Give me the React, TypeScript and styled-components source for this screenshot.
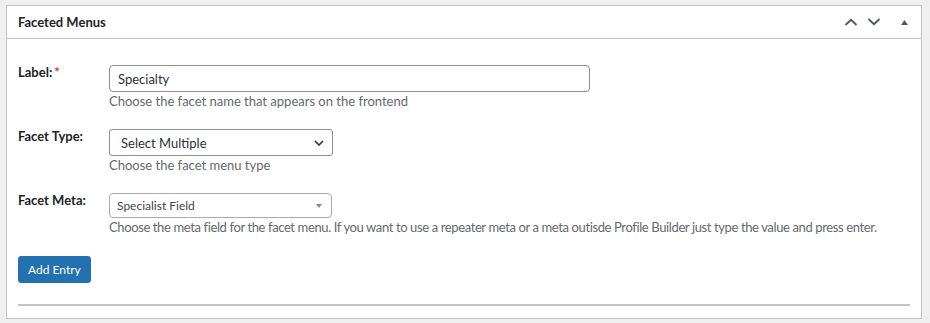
import React from 'react';
import styled, { createGlobalStyle } from 'styled-components';

const GlobalStyle = createGlobalStyle`
  html, body {
    margin: 0;
    padding: 0;
    background: #f0f0f1;
  }
  body {
    font-family: Lato, "Noto Sans", sans-serif;
    font-size: 13px;
    color: #1d2327;
  }
`;

const Page = styled.div`
  padding: 5px 0 0 6px;
`;

const Panel = styled.div`
  width: 916px;
  box-sizing: border-box;
  background: #fff;
  border: 1px solid #c3c4c7;
`;

const PanelHeader = styled.div`
  display: flex;
  align-items: center;
  justify-content: space-between;
  height: 33px;
  box-sizing: border-box;
  padding: 0 11px;
  border-bottom: 1px solid #c3c4c7;
`;

const Title = styled.h2`
  margin: 0;
  font-size: 13px;
  font-weight: 700;
  color: #1d2327;
`;

const Controls = styled.div`
  display: flex;
  align-items: center;
  gap: 9px;
  margin-right: -1px;
`;

const IconButton = styled.span<{ $gap?: number }>`
  display: flex;
  align-items: center;
  justify-content: center;
  width: 14px;
  height: 14px;
  margin-left: ${p => p.$gap ?? 0}px;
`;

const PanelBody = styled.div`
  padding: 26px 11px 12px;
`;

const Row = styled.div<{ $mb: number }>`
  display: grid;
  grid-template-columns: 91px 1fr;
  margin-bottom: ${p => p.$mb}px;
`;

const Label = styled.label`
  font-weight: 700;
  font-size: 13px;
  line-height: 16px;
  margin-top: -1px;
  color: #1d2327;
`;

const Required = styled.span`
  color: #d63638;
  margin-left: 2px;
`;

const Field = styled.div`
  display: flex;
  flex-direction: column;
  align-items: flex-start;
`;

const TextInput = styled.div`
  width: 481px;
  height: 27px;
  box-sizing: border-box;
  border: 1px solid #8c8f94;
  border-radius: 4px;
  padding: 0 8px;
  display: flex;
  align-items: center;
  font-size: 13px;
  color: #2c3338;
`;

const NativeSelect = styled.div`
  width: 224px;
  height: 27px;
  box-sizing: border-box;
  border: 1px solid #8c8f94;
  border-radius: 3px;
  padding: 0 8px 0 11px;
  display: flex;
  align-items: center;
  justify-content: space-between;
  font-size: 13px;
  color: #2c3338;
`;

const ComboSelect = styled.div`
  width: 223px;
  height: 25px;
  box-sizing: border-box;
  border: 1px solid #aaa;
  border-radius: 4px;
  padding: 0 8px 0 7px;
  display: flex;
  align-items: center;
  justify-content: space-between;
  font-size: 12px;
  color: #444;
`;

const Caret = styled.span`
  width: 0;
  height: 0;
  border-left: 3.5px solid transparent;
  border-right: 3.5px solid transparent;
  border-top: 4px solid #888;
  margin-right: 1px;
`;

const Help = styled.p<{ $tight?: boolean }>`
  margin: 0;
  font-size: 13px;
  line-height: 18px;
  color: #646970;
  white-space: nowrap;
  letter-spacing: ${p => (p.$tight ? '-0.38px' : '0')};
`;

const Button = styled.button`
  display: block;
  height: 27px;
  padding: 0 9px;
  border: 1px solid #2271b1;
  border-radius: 3px;
  background: #2271b1;
  color: #fff;
  font-family: inherit;
  font-size: 12px;
  cursor: pointer;
`;

const Divider = styled.hr`
  margin: 21px 0 0;
  border: 0;
  height: 2px;
  background: #c3c4c7;
`;

const Chevron = ({ up }: { up?: boolean }) => (
  <svg width="14" height="8" viewBox="0 0 14 8">
    <polyline
      points={up ? '1.5,7 7,1.8 12.5,7' : '1.5,1 7,6.2 12.5,1'}
      fill="none"
      stroke="#50575e"
      strokeWidth="1.8"
    />
  </svg>
);

export default function App() {
  return (
    <>
      <GlobalStyle />
      <Page>
        <Panel>
          <PanelHeader>
            <Title>Faceted Menus</Title>
            <Controls>
              <IconButton><Chevron up /></IconButton>
              <IconButton><Chevron /></IconButton>
              <IconButton $gap={7}>
                <svg width="7" height="5" viewBox="0 0 7 5">
                  <polygon points="0,5 3.5,0 7,5" fill="#50575e" />
                </svg>
              </IconButton>
            </Controls>
          </PanelHeader>
          <PanelBody>
            <Row $mb={19}>
              <Label>Label:<Required>*</Required></Label>
              <Field>
                <TextInput>Specialty</TextInput>
                <Help>Choose the facet name that appears on the frontend</Help>
              </Field>
            </Row>
            <Row $mb={19}>
              <Label>Facet Type:</Label>
              <Field>
                <NativeSelect>
                  Select Multiple
                  <svg width="10" height="6" viewBox="0 0 10 6">
                    <polyline points="1,1 5,5 9,1" fill="none" stroke="#2c3338" strokeWidth="1.6" />
                  </svg>
                </NativeSelect>
                <Help>Choose the facet menu type</Help>
              </Field>
            </Row>
            <Row $mb={20}>
              <Label>Facet Meta:</Label>
              <Field>
                <ComboSelect>
                  Specialist Field
                  <Caret />
                </ComboSelect>
                <Help $tight>
                  Choose the meta field for the facet menu. If you want to use a repeater meta or a meta outisde Profile Builder just type the value and press enter.
                </Help>
              </Field>
            </Row>
            <Button>Add Entry</Button>
            <Divider />
          </PanelBody>
        </Panel>
      </Page>
    </>
  );
}
